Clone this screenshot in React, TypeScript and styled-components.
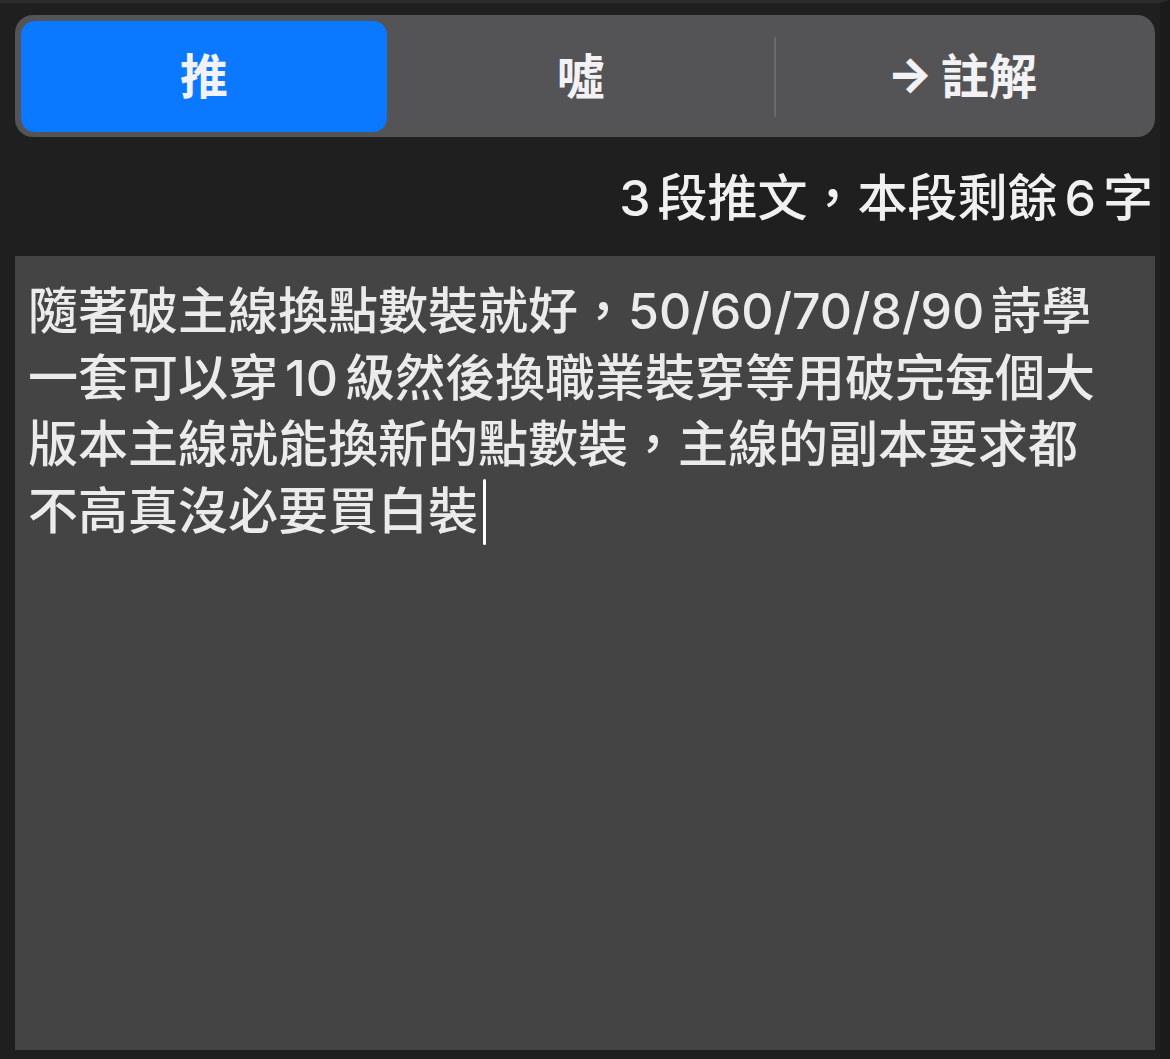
import React from "react";
import styled, { createGlobalStyle } from "styled-components";

const GlobalStyle = createGlobalStyle`
  html, body {
    margin: 0;
    padding: 0;
    background: #1f1f1f;
  }
  body {
    font-family: "Inter", "Noto Sans CJK TC", "Noto Sans", sans-serif;
    -webkit-font-smoothing: antialiased;
  }
  * { box-sizing: border-box; }
`;

const Page = styled.div`
  width: 1170px;
  height: 1059px;
  display: flex;
  flex-direction: column;
  padding: 12px 5px 9px 15px;
  border-top: 3px solid #2b2b2b;
  border-right: 10px solid #1b1b1b;
  background: #1f1f1f;
`;

const Segmented = styled.div`
  height: 122px;
  border-radius: 18px;
  background: #545457;
  padding: 6px 6px 5px;
  display: grid;
  grid-template-columns: 366px 388px 1fr;
  align-items: stretch;
`;

const Segment = styled.button<{ $active?: boolean; $divider?: boolean }>`
  position: relative;
  border: none;
  margin: 0;
  padding: 0 0 7px;
  border-radius: 14px;
  background: ${(p) => (p.$active ? "#0a78ff" : "transparent")};
  color: #f2f2f4;
  font-family: "Inter", "Noto Sans CJK TC", sans-serif;
  font-size: 48px;
  font-weight: 700;
  display: flex;
  align-items: center;
  justify-content: center;
  cursor: pointer;
  &::after {
    content: "";
    display: ${(p) => (p.$divider ? "block" : "none")};
    position: absolute;
    right: -1px;
    top: 16px;
    bottom: 15px;
    width: 2px;
    border-radius: 1px;
    background: #6a6a6e;
  }
`;

const Arrow = styled.span`
  font-weight: 800;
  margin-right: 8px;
`;

const Counter = styled.div`
  height: 119px;
  display: flex;
  align-items: center;
  justify-content: flex-end;
  padding: 0 2px 6px 0;
  color: #f0f0f0;
  font-size: 50px;
  font-weight: 500;
  font-family: "Inter", "Noto Sans CJK TC", sans-serif;
`;

const Latin = styled.span`
  margin: 0 0.07em;
`;

const Editor = styled.div`
  flex: 1;
  background: #444444;
  padding: 22px 13px 14px;
  color: #ebebeb;
  font-size: 50px;
  line-height: 66.5px;
  font-weight: 500;
  font-family: "Inter", "Noto Sans CJK TC", sans-serif;
  white-space: pre-wrap;
  overflow: hidden;
`;

const Caret = styled.span`
  display: inline-block;
  width: 3px;
  height: 66px;
  margin-left: 5px;
  border-radius: 2px;
  background: #ffffff;
  vertical-align: -16px;
`;

export default function App() {
  return (
    <>
      <GlobalStyle />
      <Page>
        <Segmented>
          <Segment $active>推</Segment>
          <Segment $divider>噓</Segment>
          <Segment>
            <Arrow>→</Arrow>註解
          </Segment>
        </Segmented>
        <Counter>
          <span>
            3<Latin />段推文，本段剩餘<Latin />6<Latin />字
          </span>
        </Counter>
        <Editor>
          隨著破主線換點數裝就好，50/60/70/8/90<Latin />詩學{"\n"}一套可以穿<Latin />10<Latin />級然後換職業裝穿等用破完每個大{"\n"}版本主線就能換新的點數裝，主線的副本要求都{"\n"}不高真沒必要買白裝
          <Caret />
        </Editor>
      </Page>
    </>
  );
}
